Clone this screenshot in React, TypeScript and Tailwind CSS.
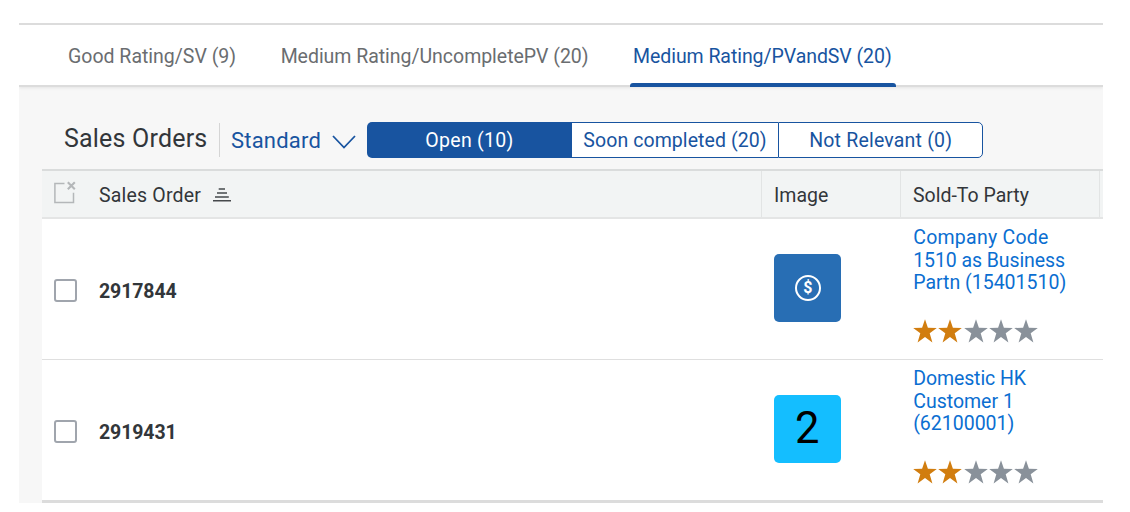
import type { ReactNode } from "react";

function Star({ filled }: { filled: boolean }) {
  return (
    <svg viewBox="0 0 24 24" className={filled ? "h-6 w-6 text-[#d17d0f]" : "h-6 w-6 text-[#89919a]"} fill="currentColor">
      <path d="M12 .3l2.9 8.5 8.9.1-7.1 5.4 2.7 9.1L12 18.1l-7.4 5.3 2.7-9.1L.2 8.9l8.9-.1z" />
    </svg>
  );
}

function Rating({ value }: { value: number }) {
  return (
    <div className="flex gap-[1.3px]" role="img" aria-label={`${value} / 5`}>
      {[1, 2, 3, 4, 5].map((n) => (
        <Star key={n} filled={n <= value} />
      ))}
    </div>
  );
}

function Row({ id, tile, children, rating }: { id: string; tile: ReactNode; children: ReactNode; rating: number }) {
  return (
    <div className="flex h-[141px] border-b border-[#dfdfdf] bg-white last:h-[143px] last:border-b-[3px] last:border-[#dcdcdc]">
      <div className="flex w-[719.5px] items-center pt-[3px] pl-3">
        <span className="h-[23px] w-[23px] rounded-[3px] border-2 border-[#a0a5ad] bg-white" />
        <span className="ml-[22px] pt-[3px] font-bold tracking-[-0.1px] text-[#32363a]">{id}</span>
      </div>
      <div className="w-[140px] pt-[35px] pl-3">{tile}</div>
      <div className="flex flex-col pt-2 pl-[11.7px]">
        <div className="flex h-[69px] flex-col leading-[22.5px] text-[#0a6ed1]">{children}</div>
        <div className="mt-[23px]">
          <Rating value={rating} />
        </div>
      </div>
    </div>
  );
}

export default function App() {
  return (
    <div className="h-[512px] w-[1130px] overflow-hidden bg-white pt-[23px] pl-[19px] font-['Roboto',sans-serif] text-[19.5px] whitespace-nowrap">
      <div className="flex h-[480px] w-[1084px] flex-col overflow-hidden bg-[#f7f7f7]">
        <nav className="flex h-16 shrink-0 border-y-2 border-[#dcdcdc] bg-white pl-[49px] text-[#6a6d70] shadow-[0_1px_3px_rgba(0,0,0,0.08)]">
          <div className="flex h-16 items-center">Good Rating/SV (9)</div>
          <div className="ml-[44.5px] flex h-16 items-center tracking-[-0.03px]">Medium Rating/UncompletePV (20)</div>
          <div className="ml-[41px] flex h-[62px] w-[266px] flex-col justify-end text-[#1854a0]">
            <span className="flex h-[58px] items-center pt-[6px] pl-[3.5px]">
              <span className="tracking-[-0.06px]">Medium Rating/PVandSV (20)</span>
            </span>
            <span className="h-1 shrink-0 rounded-t-[3px] bg-[#1854a0]" />
          </div>
        </nav>

        <div className="flex h-[82px] shrink-0 items-start pl-[45px]">
          <h1 className="mt-[36.5px] w-[155px] text-[25px] leading-[30px] tracking-[0.2px] text-[#32363a]">Sales Orders</h1>
          <span className="mt-9 h-[34px] w-px bg-[#d5d5d5]" />
          <span className="mt-[39px] ml-[11px] w-[101px] text-[22px] leading-[30px] tracking-[0.2px] text-[#1854a0]">Standard</span>
          <svg viewBox="0 0 24 14" className="mt-[48px] h-[14px] w-6" fill="none" stroke="#1854a0" strokeWidth="1.8">
            <path d="M1 1l11 11.5L23 1" />
          </svg>
          <div className="mt-[35px] ml-[11px] flex h-9 text-[#1854a0]">
            <div className="flex w-[205px] items-center justify-center rounded-l-[5px] bg-[#1854a0] pt-[2px] tracking-[0.3px] text-white">Open (10)</div>
            <div className="flex w-[206px] items-center justify-center border-y border-[#1854a0] bg-white pt-[2px] tracking-[0.08px]">Soon completed (20)</div>
            <div className="flex w-[205.4px] items-center justify-center rounded-r-[5px] border border-[#1854a0] bg-white pt-[2px] tracking-[0.2px]">Not Relevant (0)</div>
          </div>
        </div>

        <div className="ml-[23px] flex shrink-0 flex-col">
          <div className="flex h-[50px] border-t-2 border-b-2 border-t-[#dadcdc] border-b-[#e4e5e5] bg-[#f2f4f4] text-[#32363a]">
            <div className="flex w-[720px] items-center border-r border-[#e2e4e4] pl-3">
              <svg viewBox="0 0 24 24" className="-mt-[2px] h-6 w-6" fill="none" stroke="#b4b7b9" strokeWidth="1.5">
                <path d="M10.5 2.6H.9v18.8h18.6v-9.6" />
                <path d="M13.8 1.2l7 7M20.8 1.2l-7 7" strokeWidth="2.1" />
              </svg>
              <span className="ml-[21px] pt-1 tracking-[0.2px]">Sales Order</span>
              <svg viewBox="0 0 18 14" className="mt-px ml-[12px] h-[14px] w-[18px]" fill="none" stroke="#46494c" strokeWidth="1.4">
                <path d="M5.7 1h6.3M4 5h10M2 9h13.8M0 12.8h18" />
              </svg>
            </div>
            <div className="flex w-[139px] items-center border-r border-[#e2e4e4] pt-1 pl-3">Image</div>
            <div className="flex w-[199px] items-center border-r border-[#e2e4e4] pt-1 pl-3">Sold-To Party</div>
          </div>

          <Row
            id="2917844"
            rating={2}
            tile={
              <div className="flex h-[67.5px] w-[67.5px] items-center justify-center rounded-[5px] bg-[#286eb4] pl-px text-white">
                <span className="flex h-[26px] w-[26px] items-center justify-center rounded-full border-2 border-white pt-px text-[16px] leading-none font-bold">$</span>
              </div>
            }
          >
            <span className="tracking-[0.25px]">Company Code</span>
            <span className="tracking-[-0.08px]">1510 as Business</span>
            <span>Partn (15401510)</span>
          </Row>
          <Row
            id="2919431"
            rating={2}
            tile={
              <div className="flex h-[67.5px] w-[67.5px] items-center justify-center rounded-[5px] bg-[#14beff] text-[43.5px] leading-none text-black">2</div>
            }
          >
            <span className="tracking-[-0.1px]">Domestic HK</span>
            <span>Customer 1</span>
            <span>(62100001)</span>
          </Row>
        </div>
      </div>
    </div>
  );
}
